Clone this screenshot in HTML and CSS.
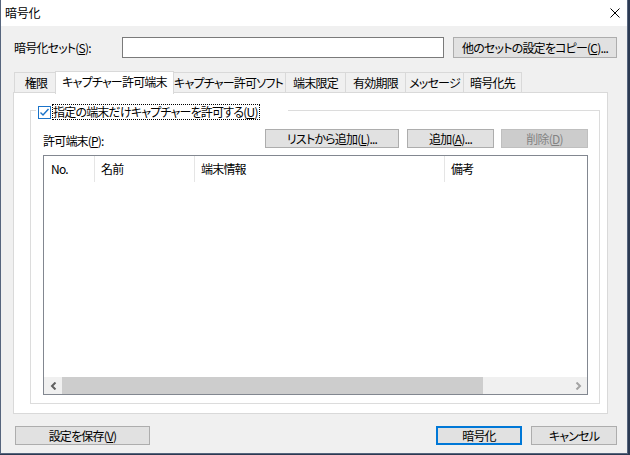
FILE: index.html
```html
<!DOCTYPE html>
<html lang="ja">
<head>
<meta charset="utf-8">
<title>暗号化</title>
<link rel="stylesheet" href="styles.css">
</head>
<body>
<div class="window">
  <div class="titlebar">
    <span class="title">暗号化</span>
    <svg class="close" width="10" height="10" viewBox="0 0 10 10"><path d="M0.5 0.5 L9.5 9.5 M9.5 0.5 L0.5 9.5" stroke="#000" stroke-width="1" fill="none"/></svg>
  </div>
  <div class="body">
    <div class="setrow">
      <span class="setlabel">暗号化セット(<u>S</u>):</span>
      <div class="input"></div>
      <div class="btn copybtn">他のセットの設定をコピー(<u>C</u>)...</div>
    </div>
    <div class="tabs">
      <div class="tab t1">権限</div>
      <div class="tab sel">キャプチャー許可端末</div>
      <div class="tab t3">キャプチャー許可ソフト</div>
      <div class="tab t4">端末限定</div>
      <div class="tab t5">有効期限</div>
      <div class="tab t6">メッセージ</div>
      <div class="tab t7">暗号化先</div>
    </div>
    <div class="panel">
      <div class="group">
        <div class="legend">
          <span class="checkbox"><svg width="11" height="11" viewBox="0 0 11 11"><path d="M1.5 5.5 L4 8 L9.5 2" stroke="#1a73c9" stroke-width="1.4" fill="none"/></svg></span>
          <span class="focus">指定の端末だけキャプチャーを許可する(<u>U</u>)</span>
        </div>
        <div class="listrow">
          <span class="listlabel">許可端末(<u>P</u>):</span>
          <div class="btn b-list">リストから追加(<u>L</u>)...</div>
          <div class="btn b-add">追加(<u>A</u>)...</div>
          <div class="btn b-del disabled">削除(<u>D</u>)</div>
        </div>
        <div class="list">
          <div class="header">
            <div class="col c1">No.</div>
            <div class="col c2">名前</div>
            <div class="col c3">端末情報</div>
            <div class="col c4">備考</div>
          </div>
          <div class="listbody"></div>
          <div class="hscroll">
            <div class="arrow left"><svg width="7" height="8" viewBox="0 0 7 8"><path d="M5.5 0.5 L2 4 L5.5 7.5" stroke="#606060" stroke-width="2" fill="none"/></svg></div>
            <div class="track"><div class="thumb"></div></div>
            <div class="arrow right"><svg width="7" height="8" viewBox="0 0 7 8"><path d="M1.5 0.5 L5 4 L1.5 7.5" stroke="#a3a3a3" stroke-width="2" fill="none"/></svg></div>
          </div>
        </div>
      </div>
    </div>
    <div class="bottomrow">
      <div class="btn b-save">設定を保存(<u>V</u>)</div>
      <div class="btn b-ok">暗号化</div>
      <div class="btn b-cancel">キャンセル</div>
    </div>
  </div>
</div>
</body>
</html>
```
FILE: styles.css
```css
html, body {
  margin: 0;
  padding: 0;
}
body {
  background: #2c3a52;
  width: 630px;
  height: 455px;
  overflow: hidden;
  font-family: "Noto Sans CJK JP", sans-serif;
  font-size: 12px;
  color: #000;
  font-feature-settings: "palt";
  letter-spacing: -0.8px;
}
u {
  text-decoration: underline;
  text-underline-offset: 1px;
}
.window {
  width: 626px;
  height: 453px;
  border: 1px solid #56657d;
  border-top: none;
  background: #f0f0f0;
  display: flex;
  flex-direction: column;
}
.titlebar {
  height: 26px;
  background: #fff;
  display: flex;
  align-items: center;
  justify-content: space-between;
  padding: 0 7px 0 4px;
  flex: none;
}
.title {
  font-size: 12px;
  line-height: 16px;
  letter-spacing: -0.2px;
}
.body {
  padding: 11px 0 0 12px;
  display: flex;
  flex-direction: column;
}
.setrow {
  display: flex;
  align-items: center;
  height: 21px;
}
.setlabel {
  width: 109px;
  line-height: 16px;
  padding-left: 1px;
  box-sizing: border-box;
}
.input {
  width: 322px;
  height: 21px;
  box-sizing: border-box;
  border: 1px solid #7a7a7a;
  background: #fff;
}
.btn {
  box-sizing: border-box;
  height: 19px;
  border: 1px solid #adadad;
  background: #e1e1e1;
  display: flex;
  align-items: center;
  justify-content: center;
  line-height: 14px;
  white-space: nowrap;
}
.copybtn {
  margin-left: 9px;
  width: 164px;
  height: 21px;
}
.tabs {
  display: flex;
  align-items: flex-end;
  height: 21px;
  margin-top: 13px;
  margin-left: 1px;
  position: relative;
  z-index: 1;
}
.tab {
  box-sizing: border-box;
  height: 20px;
  border: 1px solid #d9d9d9;
  border-bottom: none;
  background: #f0f0f0;
  margin-right: -1px;
  display: flex;
  align-items: center;
  justify-content: center;
  white-space: nowrap;
  line-height: 14px;
  padding-top: 1px;
}
.t1 { width: 44px; }
.sel {
  width: 119px;
  height: 23px;
  margin-left: -2px;
  margin-right: -3px;
  margin-bottom: -2px;
  background: #fff;
  padding-bottom: 3px;
  position: relative;
  z-index: 2;
}
.t3 { width: 115px; }
.t4 { width: 61px; }
.t5 { width: 61px; }
.t6 { width: 59px; }
.t7 { width: 59px; }
.panel {
  width: 595px;
  height: 322px;
  box-sizing: border-box;
  border: 1px solid #d9d9d9;
  background: #fff;
  padding: 17px 0 0 16px;
}
.group {
  position: relative;
  width: 570px;
  height: 294px;
  box-sizing: border-box;
  border: 1px solid #dcdcdc;
  padding: 18px 11px 0 12px;
}
.legend {
  position: absolute;
  top: -7px;
  left: 5px;
  width: 252px;
  height: 16px;
  box-sizing: border-box;
  padding-left: 2px;
  background: #fff;
  display: flex;
  align-items: center;
}
.checkbox {
  width: 13px;
  height: 13px;
  box-sizing: border-box;
  border: 1px solid #1a73c9;
  background: #fff;
  display: flex;
  align-items: center;
  justify-content: center;
  flex: none;
}
.checkbox svg {
  display: block;
}
.focus {
  margin-left: 1px;
  height: 16px;
  box-sizing: border-box;
  border: 1px dotted #000;
  line-height: 14px;
  padding: 0 1px 0 0;
  white-space: nowrap;
}
.listrow {
  display: flex;
  align-items: flex-end;
  height: 19px;
}
.listlabel {
  flex: 1;
  line-height: 14px;
}
.b-list { width: 134px; }
.b-add { width: 87px; margin-left: 8px; }
.b-del { width: 87px; margin-left: 7px; }
.disabled {
  background: #cccccc;
  border-color: #bfbfbf;
  color: #838383;
}
.list {
  margin-top: 7px;
  height: 240px;
  box-sizing: border-box;
  border: 1px solid #828790;
  background: #fff;
  display: flex;
  flex-direction: column;
}
.header {
  display: flex;
  height: 26px;
  flex: none;
}
.col {
  box-sizing: border-box;
  border-right: 1px solid #e5e5e5;
  display: flex;
  align-items: center;
  padding-left: 6px;
  line-height: 14px;
}
.c1 { width: 51px; padding-left: 7px; }
.c2 { width: 100px; }
.c3 { width: 250px; }
.c4 { flex: 1; border-right: none; }
.listbody {
  flex: 1;
}
.hscroll {
  height: 17px;
  display: flex;
  background: #f0f0f0;
  flex: none;
}
.arrow {
  display: flex;
  align-items: center;
  justify-content: center;
}
.arrow svg { display: block; }
.left { width: 18px; }
.right { width: 17px; }
.track {
  flex: 1;
  display: flex;
}
.thumb {
  width: 421px;
  background: #cdcdcd;
}
.bottomrow {
  display: flex;
  margin-top: 12px;
  margin-left: 2px;
  margin-right: 10px;
}
.b-save { width: 135px; }
.b-ok {
  width: 86px;
  margin-left: auto;
  border: 2px solid #0078d7;
}
.b-cancel {
  width: 86px;
  margin-left: 9px;
}
```
